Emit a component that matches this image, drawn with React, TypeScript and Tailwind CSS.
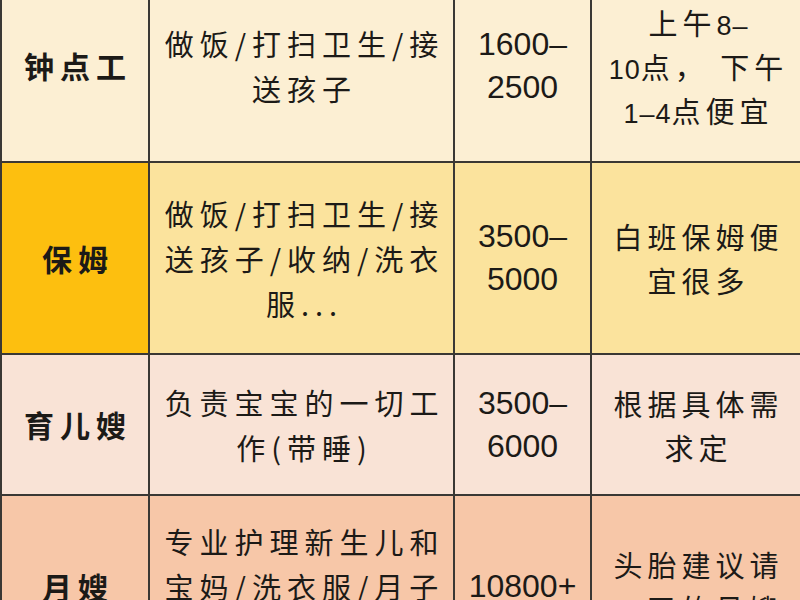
import type { ReactNode } from "react";

const cjk = "font-['Noto_Sans_CJK_SC',sans-serif]";

// digits in the Chinese columns are drawn smaller than the characters
function N({ children }: { children: ReactNode }) {
  return <span className="font-['Liberation_Sans',sans-serif] text-[27px] leading-none tracking-[1px]">{children}</span>;
}

type Row = {
  name: string;
  work: ReactNode[];
  pay: string[];
  note: ReactNode[];
  height: string;
  nameBg: string;
  bg: string;
};

const rows: Row[] = [
  {
    name: "钟点工",
    work: ["做饭/打扫卫生/接", "送孩子"],
    pay: ["1600–", "2500"],
    note: [
      <>上午<N>8–</N></>,
      <><N>10</N>点，&nbsp;下午</>,
      <><N>1–4</N>点便宜</>,
    ],
    height: "h-[193px]",
    nameBg: "bg-[#fcefd3]",
    bg: "bg-[#fcefd3]",
  },
  {
    name: "保姆",
    work: ["做饭/打扫卫生/接", "送孩子/收纳/洗衣", "服..."],
    pay: ["3500–", "5000"],
    note: ["白班保姆便", "宜很多"],
    height: "h-[192px]",
    nameBg: "bg-[#fdbf0f]",
    bg: "bg-[#fbe39d]",
  },
  {
    name: "育儿嫂",
    work: ["负责宝宝的一切工", "作(带睡)"],
    pay: ["3500–", "6000"],
    note: ["根据具体需", "求定"],
    height: "h-[141px]",
    nameBg: "bg-[#f9e3d6]",
    bg: "bg-[#f9e3d6]",
  },
  {
    name: "月嫂",
    work: ["专业护理新生儿和", "宝妈/洗衣服/月子", "餐..."],
    pay: ["10800+"],
    note: ["头胎建议请", <><N>42</N>天的月嫂</>],
    height: "h-[182px]",
    nameBg: "bg-[#f7c7a8]",
    bg: "bg-[#f7c7a8]",
  },
];

function Lines({ items }: { items: ReactNode[] }) {
  return (
    <div className="flex flex-col items-center">
      {items.map((l, i) => (
        <div key={i} className="whitespace-nowrap">{l}</div>
      ))}
    </div>
  );
}

export default function App() {
  return (
    <div className="w-[800px] h-[600px] overflow-hidden bg-[#fcefd3]">
      <div className="-mt-[30px] border-l-2 border-[#3a3834] text-[#1c1a17]">
        {rows.map((r) => (
          <div
            key={r.name}
            className={`grid grid-cols-[148px_305px_137px_1fr] border-b-2 border-[#3a3834] ${r.height} ${r.bg}`}
          >
            <div
              className={`flex items-center justify-center border-r-2 border-[#3a3834] ${r.nameBg} ${cjk} text-[30px] font-bold tracking-[6px] pl-[6px]`}
            >
              {r.name}
            </div>
            <div
              className={`flex items-center justify-center border-r-2 border-[#3a3834] ${cjk} text-[29px] leading-[45px] tracking-[6px] pl-[6px]`}
            >
              <Lines items={r.work} />
            </div>
            <div className="flex items-center justify-center border-r-2 border-[#3a3834] font-['Liberation_Sans',sans-serif] text-[32px] leading-[43px]">
              <Lines items={r.pay} />
            </div>
            <div
              className={`flex items-center justify-center ${cjk} text-[29px] leading-[44px] tracking-[5px] pl-[5px]`}
            >
              <Lines items={r.note} />
            </div>
          </div>
        ))}
      </div>
    </div>
  );
}
